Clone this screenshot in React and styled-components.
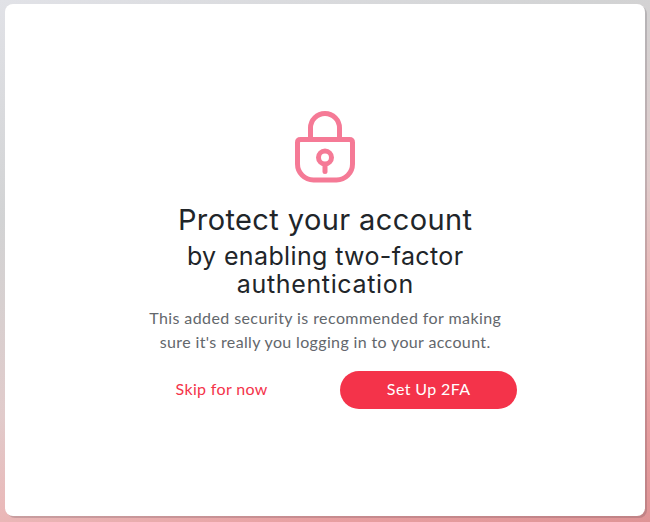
import React from "react";
import styled, { createGlobalStyle } from "styled-components";

const GlobalStyle = createGlobalStyle`
  body { margin: 0; }
  *, *::before, *::after { box-sizing: border-box; }
`;

const Page = styled.main`
  height: 522px;
  overflow: hidden;
  padding: 4px 5px 6px;
  background: linear-gradient(160deg, #e1e2e7 0%, #d2d3d4 29%, #d7d0d0 40%, #e1cbcb 55%, #eab8b8 68%, #e89fa1 84%, #df9496 100%);
`;

const Card = styled.section`
  height: 512px;
  padding-top: 107px;
  display: flex;
  flex-direction: column;
  align-items: center;
  background: #fff;
  border-radius: 8px;
  box-shadow: 2px 2px 0 rgba(70, 60, 70, 0.2);
`;

const LockIcon = styled.svg`
  display: block;
  width: 60px;
  height: 72px;
  fill: none;
  stroke: #f57a96;
  stroke-width: 5;
  stroke-linecap: round;
  stroke-linejoin: round;
`;

const Title = styled.h1`
  margin: 20px 0 0;
  font: 400 29px/34px Inter, sans-serif;
  color: #212529;
  text-align: center;
`;

const Subtitle = styled.h2`
  margin: 5px 0 0;
  font: 400 25px/28px Inter, sans-serif;
  color: #212529;
  text-align: center;
`;

const Description = styled.p`
  margin: 8px 0 0;
  font: 400 16px/24px Lato, sans-serif;
  color: #63676c;
  text-align: center;
`;

const Line = styled.span`
  display: block;
  white-space: nowrap;
  letter-spacing: ${(p) => p.$tracking}px;
  margin-right: ${(p) => -p.$tracking}px;
`;

const Actions = styled.div`
  width: 384px;
  margin-top: 17px;
  display: grid;
  grid-template-columns: 177px 177px;
  justify-content: space-between;
`;

const Button = styled.button`
  height: 38px;
  padding: 0 0 2px;
  border: 0;
  border-radius: 19px;
  font: 400 16px/24px Lato, sans-serif;
  color: ${(p) => (p.$primary ? "#fff" : "#f4334a")};
  background: ${(p) => (p.$primary ? "#f4334a" : "transparent")};
`;

export default function App() {
  return (
    <>
      <GlobalStyle />
      <Page>
        <Card>
          <LockIcon viewBox="0 0 60 72" aria-hidden="true">
            <path d="M15.5 28V17a14.5 14.5 0 0 1 29 0V28" />
            <path d="M5.5 28.5H54.5Q57.5 28.5 57.5 31.5V53A16 16 0 0 1 41.5 69H18.5A16 16 0 0 1 2.5 53V31.5Q2.5 28.5 5.5 28.5Z" />
            <circle cx="30" cy="46.5" r="6.5" />
            <path d="M30 53.5V60.5" />
          </LockIcon>
          <Title><Line $tracking={0.4}>Protect your account</Line></Title>
          <Subtitle>
            <Line $tracking={0.37}>by enabling two-factor</Line>
            <Line $tracking={0.65}>authentication</Line>
          </Subtitle>
          <Description>
            <Line $tracking={0.41}>This added security is recommended for making</Line>
            <Line $tracking={0.36}>sure it's really you logging in to your account.</Line>
          </Description>
          <Actions>
            <Button type="button"><Line $tracking={0.35}>Skip for now</Line></Button>
            <Button type="button" $primary><Line $tracking={0.4}>Set Up 2FA</Line></Button>
          </Actions>
        </Card>
      </Page>
    </>
  );
}
